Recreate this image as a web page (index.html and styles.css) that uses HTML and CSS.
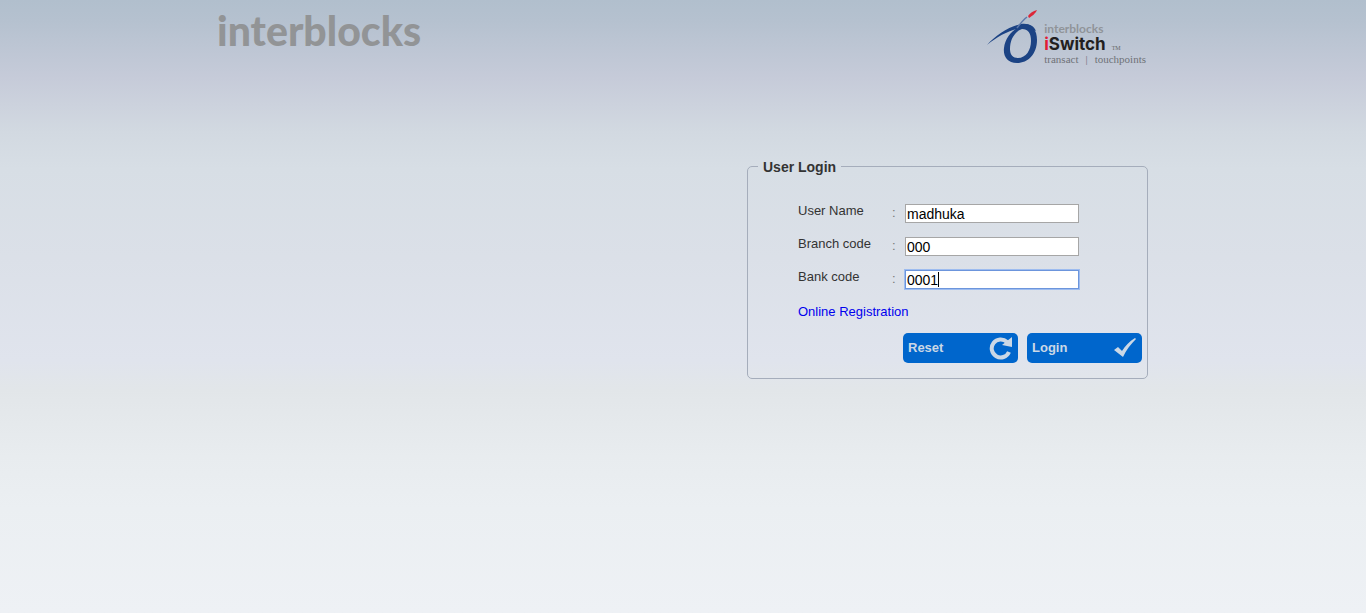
FILE: index.html
```html
<!DOCTYPE html>
<html lang="en">
<head>
<meta charset="utf-8">
<title>interblocks iSwitch - User Login</title>
<link rel="stylesheet" href="styles.css">
</head>
<body>
<div class="page">
  <header class="header">
    <div class="brand">interblocks</div>
    <div class="product">
      <svg class="product-mark" viewBox="0 0 56 62" aria-hidden="true">
        <path fill="#1c4384" fill-rule="evenodd" d="M34 19C44 16 51 22 51 34C51 48 42 57 31 57C21 57 17 50 18 42C19 33 25 25 33 21ZM36 23C28 26 24 34 24 43C24 49 27 52 32 52C40 52 45 44 45 35C45 27 42 23 36 23Z"/>
        <path fill="#1c4384" d="M1 39C10 29 22 21 35 18C43 17 48 20 50 25C46 23 42 22 36 22C23 24 12 30 1 39Z"/>
        <path fill="none" stroke="#5d79ab" stroke-width="1.5" d="M31 22C34 18 37 14 41 11"/>
        <path fill="#dc2638" d="M42 10C44 7 47 5 51 4C50 7 46 10 43 12Z"/>
      </svg>
      <div class="product-text">
        <div class="product-owner">interblocks</div>
        <div class="product-name"><span><span class="accent">i</span>Switch</span><span class="mark">TM</span></div>
        <div class="product-tags"><span>transact</span><span>|</span><span>touchpoints</span></div>
      </div>
    </div>
  </header>
  <main class="main">
    <form class="login-form" autocomplete="off">
      <fieldset class="panel">
        <legend class="panel-title">User Login</legend>
        <div class="fields">
          <div class="row">
            <label class="label" for="username">User Name</label>
            <span class="colon">:</span>
            <input class="input" id="username" type="text" value="madhuka" spellcheck="false">
          </div>
          <div class="row">
            <label class="label" for="branch">Branch code</label>
            <span class="colon">:</span>
            <input class="input" id="branch" type="text" value="000">
          </div>
          <div class="row">
            <label class="label" for="bank">Bank code</label>
            <span class="colon">:</span>
            <span class="active-field">
              <input class="input input-active" id="bank" type="text" value="0001">
              <span class="caret"></span>
            </span>
          </div>
        </div>
        <a class="register" href="#">Online Registration</a>
        <div class="actions">
          <button class="button" type="reset">Reset
            <svg class="button-icon" viewBox="0 0 24 24" aria-hidden="true">
              <path fill="none" stroke="#cbd8e6" stroke-width="4" d="M20 16A9 9 0 1 1 18 6"/>
              <path fill="#cbd8e6" d="M23 1V11L13 9Z"/>
            </svg>
          </button>
          <button class="button" type="submit">Login
            <svg class="button-icon" viewBox="0 0 24 24" aria-hidden="true">
              <path fill="#cbd8e6" d="M1 14L5 11L9 15C12 10 17 5 22 2L23 3C18 8 13 14 10 21Z"/>
            </svg>
          </button>
        </div>
      </fieldset>
    </form>
  </main>
</div>
</body>
</html>
```
FILE: styles.css
```css
* {
  box-sizing: border-box;
}

html {
  min-height: 100%;
}

body {
  margin: 0;
  min-height: 100vh;
  font: 13px/16px "Liberation Sans", Arial, sans-serif;
  color: #333;
  background: linear-gradient(#b1bfcd 0, #b5c1cf 20px, #c6cbd9 78px, #d2d9e1 132px, #d7dee5 168px, #dbe0e8 258px, #e0e4ed 360px, #e2e6e9 390px, #e8ecef 457px, #ebeff2 508px, #eef1f5 613px);
}

.page {
  max-width: 932px;
  margin: 0 auto;
  padding-right: 1px;
}

.header {
  display: flex;
  justify-content: space-between;
  padding: 6px 0 0;
}

.brand {
  font: 900 41px/50px Lato, sans-serif;
  color: #929496;
}

.product {
  display: flex;
  gap: 2px;
}

.product-mark {
  width: 56px;
  height: 62px;
}

.product-text {
  padding: 16px 2px 0 0;
}

.product-owner {
  font: 700 12px/14px Lato, sans-serif;
  color: #909499;
}

.product-name {
  display: flex;
  gap: 6px;
  align-items: baseline;
  font: 700 17px/16px Inter, sans-serif;
  color: #231f20;
}

.accent {
  color: #e31b36;
}

.mark {
  font: 6px/8px "Liberation Serif", serif;
  color: #666;
}

.product-tags {
  display: flex;
  gap: 7px;
  font: 11px/14px "Liberation Serif", serif;
  color: #6f7277;
}

.main {
  display: flex;
  justify-content: flex-end;
  padding-top: 89px;
}

.login-form {
  width: 401px;
}

.panel {
  margin: 0;
  padding: 28px 5px 15px 10px;
  border: 1px solid #a5adbb;
  border-radius: 5px;
}

.panel-title {
  padding: 2px 5px 0;
  font-size: 14px;
  line-height: 16px;
  font-weight: 700;
}

.fields {
  display: grid;
  gap: 13px;
  padding-left: 40px;
}

.row {
  display: grid;
  grid-template-columns: 94px 13px 174px;
  height: 20px;
}

.colon {
  padding-top: 2px;
  color: #777;
}

.input {
  align-self: end;
  width: 174px;
  height: 19px;
  padding: 0 1px;
  border: 1px solid #a6a6a6;
  background: #fff;
  font: 14px/16px "Liberation Sans", Arial, sans-serif;
  color: #000;
}

.active-field {
  position: relative;
  display: flex;
}

.input-active,
.input:focus {
  border-color: #6c95dc;
  outline: 1px solid #9dbcf0;
}

.caret {
  position: absolute;
  top: 3px;
  left: 33px;
  width: 1px;
  height: 15px;
  background: #000;
}

.register {
  display: inline-block;
  margin: 15px 0 0 40px;
  color: #00e;
  text-decoration: none;
}

.actions {
  display: flex;
  justify-content: flex-end;
  gap: 9px;
  padding-top: 13px;
}

.button {
  display: flex;
  align-items: center;
  justify-content: space-between;
  width: 115px;
  height: 30px;
  padding: 0 5px;
  border: 0;
  border-radius: 5px;
  background: #0066cc;
  font: 700 13px/16px "Liberation Sans", Arial, sans-serif;
  color: #cbd8e6;
}

.button-icon {
  width: 24px;
  height: 24px;
}
```
